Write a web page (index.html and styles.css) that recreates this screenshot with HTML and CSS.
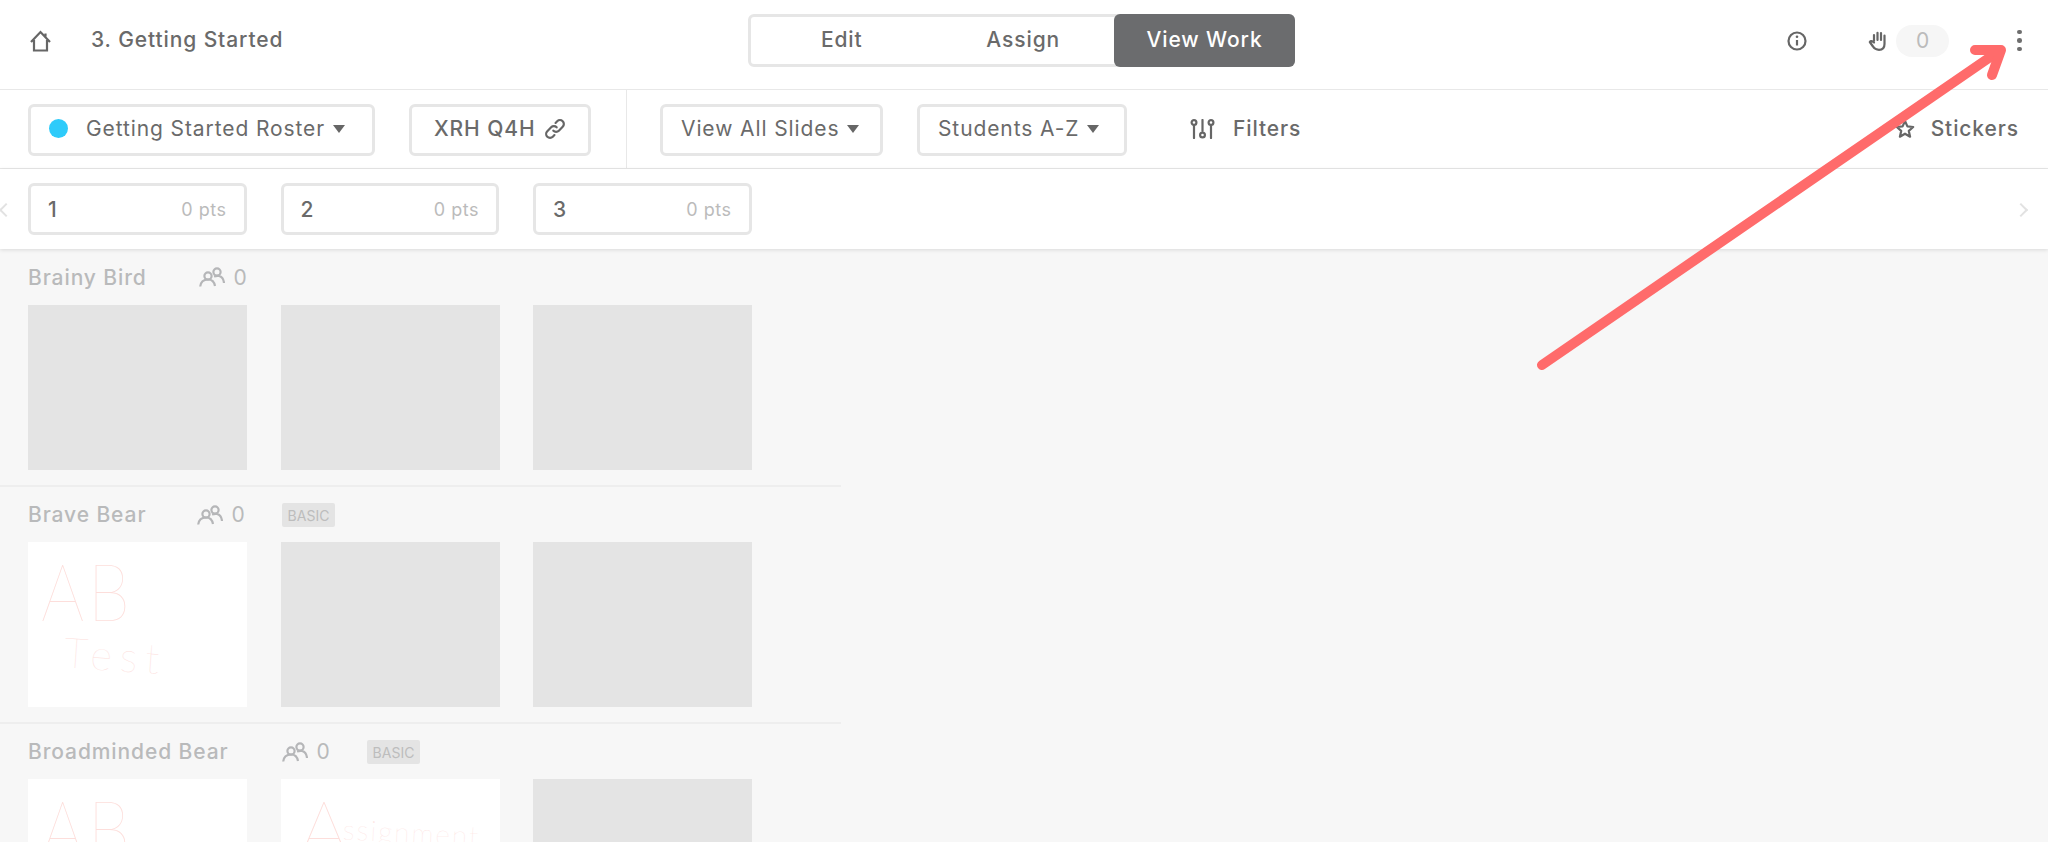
FILE: index.html
```html
<!DOCTYPE html>
<html>
<head>
    <meta charset="UTF-8">
    <title>3. Getting Started</title>
    <link rel="stylesheet" href="styles.css">
</head>
<body>
    <!-- Top bar -->
    <header class="topbar">
        <div class="topbar-left">
            <svg class="icon-home" viewBox="0 0 21 22" fill="none" stroke="#666" stroke-width="2.2"><path d="M1 12 L10.5 2 L20 12 M15.5 6.5 V3.5 M4 10 V20.5 H17 V10"/></svg>
            <span class="lesson-title">3. Getting Started</span>
        </div>
        <div class="segment">
            <div class="segment-item">Edit</div>
            <div class="segment-item">Assign</div>
            <div class="segment-item active">View Work</div>
        </div>
        <div class="topbar-right">
            <svg class="icon-info" viewBox="0 0 20 20" fill="none" stroke="#666" stroke-width="2.2"><circle cx="10" cy="10" r="8.5"/><path d="M10 9 V14.5"/><circle cx="10" cy="5.8" r="1.3" fill="#666" stroke="none"/></svg>
            <svg class="icon-hand" viewBox="0 0 20 20" fill="none" stroke="#666" stroke-width="2.2" stroke-linecap="round" stroke-linejoin="round"><path d="M6 10 V4 M9.5 9 V1.8 M13 9 V2 M16.5 10 V4.5 V13 Q16.5 18.8 11 18.8 Q7 18.8 5 15.5 L1.8 11 Q3 9 6 11.5"/></svg>
            <span class="hand-count">0</span>
            <div class="more-dots"><i></i><i></i><i></i></div>
        </div>
    </header>

    <!-- Roster and sort controls -->
    <div class="toolbar">
        <div class="toolbar-left">
            <div class="box roster-box"><span class="roster-dot"></span><span>Getting Started Roster</span><span class="caret"></span></div>
            <div class="box code-box"><span>XRH Q4H</span>
                <svg class="icon-link" viewBox="0 0 20 20" fill="none" stroke="#666" stroke-width="2" stroke-linecap="round"><path d="M8.5 11.5 a3.5 3.5 0 0 0 5 0 l3.5 -3.5 a3.5 3.5 0 0 0 -5 -5 l-1.5 1.5"/><path d="M11.5 8.5 a3.5 3.5 0 0 0 -5 0 l-3.5 3.5 a3.5 3.5 0 0 0 5 5 l1.5 -1.5"/></svg>
            </div>
        </div>
        <div class="toolbar-main">
            <div class="box slides-box"><span>View All Slides</span><span class="caret"></span></div>
            <div class="box sort-box"><span>Students A-Z</span><span class="caret"></span></div>
            <div class="filters">
                <svg class="icon-filters" viewBox="0 0 25 20" fill="none" stroke="#666" stroke-width="2.2" stroke-linecap="round"><path d="M4 6 V19 M12.5 1 V12 M21 6 V19"/><circle cx="4" cy="3.5" r="2.4"/><circle cx="12.5" cy="16" r="2.4"/><circle cx="21" cy="3.5" r="2.4"/></svg>
                <span>Filters</span>
            </div>
            <div class="stickers">
                <svg class="icon-star" viewBox="0 0 20 20" fill="none" stroke="#666" stroke-width="2.2" stroke-linejoin="round"><path d="M10 2 L12.4 7.4 L18.2 8 L13.8 11.9 L15.1 17.7 L10 14.7 L4.9 17.7 L6.2 11.9 L1.8 8 L7.6 7.4 Z"/></svg>
                <span>Stickers</span>
            </div>
        </div>
    </div>

    <!-- Slide tabs -->
    <div class="slidebar">
        <span class="chevron left"></span>
        <div class="box slide-tab"><span class="slide-num">1</span><span class="slide-pts">0 pts</span></div>
        <div class="box slide-tab"><span class="slide-num">2</span><span class="slide-pts">0 pts</span></div>
        <div class="box slide-tab"><span class="slide-num">3</span><span class="slide-pts">0 pts</span></div>
        <span class="chevron right"></span>
    </div>

    <!-- Students -->
    <main class="students">
        <section class="student first">
            <div class="student-head">
                <span class="student-name name-bird">Brainy Bird</span>
                <svg class="icon-people" viewBox="0 0 26 20" fill="none" stroke="#b5b6b8" stroke-width="2.2"><circle cx="9" cy="9" r="3.6"/><path d="M1.2 19.5 Q2 12.5 9 12.5 Q15 12.5 16 19"/><circle cx="18" cy="5" r="3.6"/><path d="M15 9.5 Q18 8.5 20 9 Q24.5 10 25 16"/></svg>
                <span class="student-count">0</span>
            </div>
            <div class="thumbs">
                <div class="thumb"></div>
                <div class="thumb"></div>
                <div class="thumb"></div>
            </div>
        </section>
        <section class="student">
            <div class="student-head">
                <span class="student-name name-brave">Brave Bear</span>
                <svg class="icon-people" viewBox="0 0 26 20" fill="none" stroke="#b5b6b8" stroke-width="2.2"><circle cx="9" cy="9" r="3.6"/><path d="M1.2 19.5 Q2 12.5 9 12.5 Q15 12.5 16 19"/><circle cx="18" cy="5" r="3.6"/><path d="M15 9.5 Q18 8.5 20 9 Q24.5 10 25 16"/></svg>
                <span class="student-count">0</span>
                <span class="badge">BASIC</span>
            </div>
            <div class="thumbs">
                <div class="thumb done">
                    <span class="scrawl scrawl-ab">AB</span>
                    <span class="scrawl scrawl-test">Test</span>
                </div>
                <div class="thumb"></div>
                <div class="thumb"></div>
            </div>
        </section>
        <section class="student">
            <div class="student-head">
                <span class="student-name name-broad">Broadminded Bear</span>
                <svg class="icon-people" viewBox="0 0 26 20" fill="none" stroke="#b5b6b8" stroke-width="2.2"><circle cx="9" cy="9" r="3.6"/><path d="M1.2 19.5 Q2 12.5 9 12.5 Q15 12.5 16 19"/><circle cx="18" cy="5" r="3.6"/><path d="M15 9.5 Q18 8.5 20 9 Q24.5 10 25 16"/></svg>
                <span class="student-count">0</span>
                <span class="badge">BASIC</span>
            </div>
            <div class="thumbs">
                <div class="thumb done">
                    <span class="scrawl scrawl-ab">AB</span>
                </div>
                <div class="thumb done">
                    <span class="scrawl scrawl-a">A</span>
                    <span class="scrawl scrawl-ssign">ssignment</span>
                </div>
                <div class="thumb"></div>
            </div>
        </section>
    </main>

    <!-- Annotation arrow over the screenshot -->
    <svg class="arrow" viewBox="0 0 2048 842" fill="none" stroke="#ff6b6b" stroke-width="10" stroke-linecap="round" stroke-linejoin="round"><path d="M1542 365 L1999 51"/><path d="M1975 50 L2001 50 L1992 75"/></svg>
</body>
</html>
```

FILE: styles.css
```css
html, body {
    margin: 0;
    padding: 0;
    height: 100%;
    overflow: hidden;
}

body {
    font-family: Inter, "Liberation Sans", sans-serif;
    font-size: 21px;
    letter-spacing: 0.9px;
    background: #f7f7f7;
    color: #6a6a6a;
}

.topbar {
    display: grid;
    grid-template-columns: 748px 547px 1fr;
    align-items: center;
    box-sizing: border-box;
    height: 90px;
    padding-bottom: 8px;
    background: #fff;
    border-bottom: 1px solid #e8e8e8;
}

.topbar-left {
    display: flex;
    align-items: center;
    padding-left: 30px;
}

.icon-home {
    width: 21px;
    height: 22px;
}

.lesson-title {
    margin-left: 40px;
    padding-bottom: 2px;
    font-weight: 500;
}

.segment {
    display: flex;
    height: 53px;
    box-sizing: border-box;
    border: 3px solid #e6e6e6;
    border-radius: 6px;
    font-weight: 500;
}

.segment-item {
    flex: 1;
    display: flex;
    align-items: center;
    justify-content: center;
    padding-bottom: 3px;
}

.segment-item.active {
    flex: none;
    width: 181px;
    margin: -3px -3px -3px 0;
    background: #6b6c6e;
    color: #fff;
    border-radius: 6px;
}

.topbar-right {
    display: flex;
    align-items: center;
}

.icon-info {
    width: 20px;
    height: 20px;
    margin-left: 492px;
}

.icon-hand {
    width: 20px;
    height: 20px;
    margin-left: 61px;
}

.hand-count {
    width: 53px;
    height: 32px;
    margin-left: 8px;
    border-radius: 16px;
    background: #f6f6f6;
    color: #bbb;
    letter-spacing: 0;
    text-align: center;
    line-height: 31px;
}

.more-dots {
    display: flex;
    flex-direction: column;
    gap: 4px;
    margin-left: 68px;
}

.more-dots i {
    display: block;
    width: 4.5px;
    height: 4.5px;
    border-radius: 50%;
    background: #6e6e6e;
}

.toolbar {
    display: flex;
    box-sizing: border-box;
    height: 79px;
    background: #fff;
    border-bottom: 1px solid #e8e8e8;
}

.box {
    display: flex;
    align-items: center;
    box-sizing: border-box;
    height: 52px;
    padding-bottom: 3px;
    background: #fff;
    border: 3px solid #e6e6e6;
    border-radius: 6px;
}

.toolbar-left {
    display: flex;
    align-items: center;
    flex: none;
    gap: 34px;
    width: 598px;
    padding: 2px 0 0 28px;
    border-right: 1px solid #e8e8e8;
}

.roster-box {
    width: 347px;
    padding-left: 18px;
}

.roster-dot {
    width: 19px;
    height: 19px;
    border-radius: 50%;
    background: #2ecbfa;
    margin-right: 18px;
}

.caret {
    width: 0;
    height: 0;
    border-left: 6.5px solid transparent;
    border-right: 6.5px solid transparent;
    border-top: 8px solid #666;
    margin-left: 8px;
}

.code-box {
    width: 182px;
    padding-left: 22px;
    font-weight: 500;
}

.icon-link {
    width: 22px;
    height: 22px;
    margin-left: 9px;
}

.toolbar-main {
    display: flex;
    align-items: center;
    flex: 1;
    padding: 2px 0 0 33px;
}

.slides-box {
    width: 223px;
    padding-left: 18px;
}

.sort-box {
    width: 210px;
    margin-left: 34px;
    padding-left: 18px;
}

.filters {
    display: flex;
    align-items: center;
    margin-left: 63px;
    padding-bottom: 3px;
    font-weight: 500;
}

.icon-filters {
    width: 25px;
    height: 20px;
    margin-right: 18px;
}

.stickers {
    display: flex;
    align-items: center;
    margin-left: auto;
    margin-right: 29px;
    padding-bottom: 3px;
    font-weight: 500;
}

.icon-star {
    width: 20px;
    height: 20px;
    margin-right: 16px;
}

.slidebar {
    display: flex;
    align-items: center;
    position: relative;
    gap: 34px;
    height: 80px;
    padding-left: 28px;
    background: #fff;
    box-shadow: 0 1px 4px rgba(0, 0, 0, 0.12);
}

.slide-tab {
    justify-content: space-between;
    width: 218.5px;
    padding: 0 17px;
}

.slide-num {
    font-weight: 500;
}

.slide-pts {
    font-size: 18px;
    letter-spacing: 0.5px;
    color: #bbb;
}

.chevron {
    position: absolute;
    top: 36px;
    width: 8px;
    height: 8px;
    border-top: 2px solid #e2e2e2;
    border-right: 2px solid #e2e2e2;
}

.chevron.left {
    left: 1px;
    transform: rotate(-135deg);
}

.chevron.right {
    right: 22px;
    transform: rotate(45deg);
}

.students {
    height: 593px;
    overflow: hidden;
}

.student {
    width: 841px;
    height: 237px;
    box-sizing: border-box;
    border-top: 2px solid #eeeeee;
    padding-left: 28px;
}

.student.first {
    height: 236px;
    border-top: none;
}

.student-head {
    display: flex;
    align-items: center;
    height: 55px;
    color: #b9babb;
    font-weight: 500;
}

.student.first .student-head {
    height: 56px;
}

.student-name {
    flex: none;
}

.name-bird { width: 171px; }
.name-brave { width: 169px; }
.name-broad { width: 254px; }

.icon-people {
    width: 26px;
    height: 20px;
}

.student-count {
    width: 14px;
    margin-left: 8px;
    font-weight: 400;
    letter-spacing: 0;
    text-align: center;
}

.badge {
    width: 53px;
    height: 24px;
    margin-left: 37px;
    line-height: 25px;
    border-radius: 2px;
    background: #e4e4e4;
    color: #bdbdbd;
    font-size: 14px;
    font-weight: 400;
    letter-spacing: 0;
    text-align: center;
}

.thumbs {
    display: flex;
    gap: 33.5px;
}

.thumb {
    position: relative;
    width: 219px;
    height: 165px;
    flex: none;
    background: #e4e4e4;
    overflow: hidden;
}

.thumb.done {
    background: #fff;
}

/* handwriting left on the slide thumbnails */
.scrawl {
    position: absolute;
    font-family: Lato, sans-serif;
    font-weight: 100;
    letter-spacing: 0;
    color: #fddedb;
    white-space: nowrap;
}

.scrawl-ab {
    left: 13px;
    top: 0;
    font-size: 80px;
    letter-spacing: 4px;
    transform: scaleX(0.85);
    transform-origin: left top;
}

.scrawl-test {
    left: 36px;
    top: 88px;
    font-size: 42px;
    letter-spacing: 8px;
    transform: rotate(4deg);
}

.scrawl-a {
    left: 18px;
    top: 0;
    font-size: 80px;
}

.scrawl-ssign {
    left: 62px;
    top: 36px;
    font-size: 28px;
    letter-spacing: 2px;
    transform: rotate(3deg);
}

.arrow {
    position: absolute;
    top: 0;
    left: 0;
    width: 2048px;
    height: 842px;
    pointer-events: none;
}
```
